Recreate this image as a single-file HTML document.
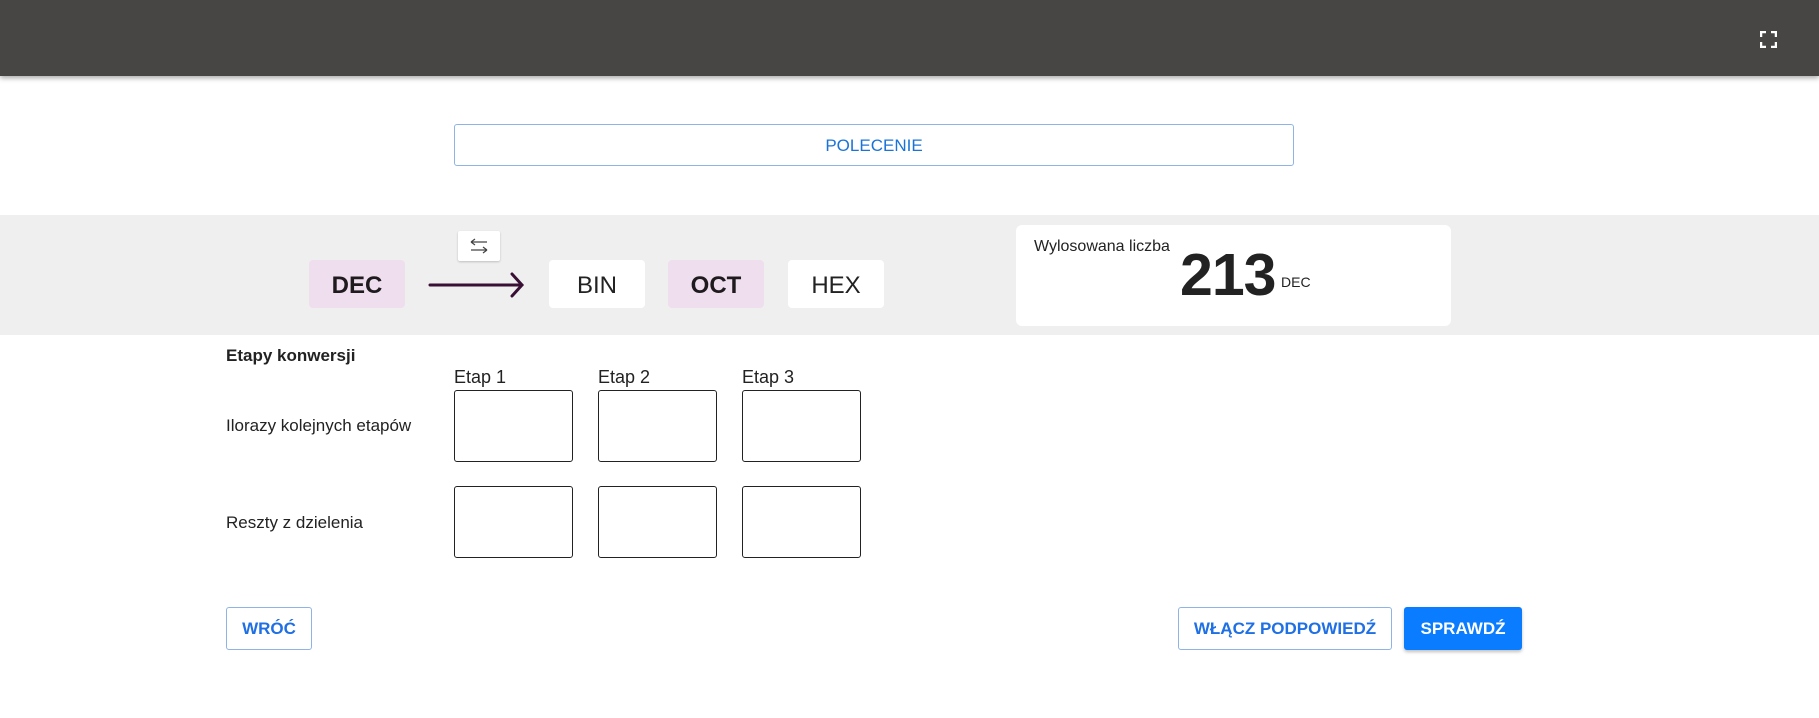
<!DOCTYPE html>
<html><head><meta charset="utf-8"><style>
*{margin:0;padding:0;box-sizing:border-box}
body{width:1819px;height:718px;position:relative;background:#fff;font-family:"Liberation Sans",sans-serif;color:#222;overflow:hidden}
.a{position:absolute}
.hdr{left:0;top:0;width:1819px;height:76px;background:#474644;box-shadow:0 2px 5px rgba(0,0,0,.35)}
.band{left:0;top:215px;width:1819px;height:120px;background:#efefef}
.tag{height:48px;width:96px;border-radius:4px;display:flex;align-items:center;justify-content:center;font-size:24px;top:260px;padding-top:4px}
.pink{background:#efdfee;font-weight:bold;color:#1f1a1e}
.wh{background:#fff;color:#222}
.box{width:119px;height:72px;border:1px solid #222;border-radius:3px}
.lbl{font-size:17px;color:#222}
.btn{height:43px;border-radius:3px;display:flex;align-items:center;justify-content:center;font-weight:bold;font-size:17px;top:607px}
</style></head><body>
<div class="a hdr"></div>
<svg class="a" style="left:1760px;top:31px" width="17" height="17" viewBox="0 0 17 17" fill="none" stroke="#fff" stroke-width="2.5"><path d="M1 6V1h5M11 1h5v5M16 11v5h-5M6 16H1v-5"/></svg>
<div class="a" style="left:454px;top:124px;width:840px;height:42px;border:1px solid #8fb3e6;border-radius:3px;color:#1a73d9;font-size:17px;display:flex;align-items:center;justify-content:center;padding-top:2px">POLECENIE</div>
<div class="a band"></div>
<div class="a tag pink" style="left:309px">DEC</div>
<svg class="a" style="left:428px;top:270px" width="100" height="30" viewBox="0 0 100 30" fill="none" stroke="#3a0f36" stroke-width="3" stroke-linecap="round"><path d="M2 15H94M84 4L94 15L84 26"/></svg>
<div class="a" style="left:458px;top:231px;width:42px;height:30px;background:#fff;border-radius:2px;box-shadow:0 1px 2px rgba(0,0,0,.2)"></div>
<svg class="a" style="left:469px;top:236px" width="20" height="20" viewBox="0 0 20 20" fill="none" stroke="#444" stroke-width="1.2"><path d="M2 6H18M2 6l4-3M2 6l4 3M2 14H18M18 14l-4-3M18 14l-4 3"/></svg>
<div class="a tag wh" style="left:549px">BIN</div>
<div class="a tag pink" style="left:668px">OCT</div>
<div class="a tag wh" style="left:788px">HEX</div>
<div class="a" style="left:1016px;top:225px;width:435px;height:101px;background:#fff;border-radius:6px"></div>
<div class="a" style="left:1034px;top:238px;font-size:16px">Wylosowana liczba</div>
<div class="a" style="left:1180px;top:241px;font-size:59px;font-weight:bold;letter-spacing:-1px;color:#222">213</div>
<div class="a" style="left:1281px;top:274px;font-size:14px">DEC</div>
<div class="a" style="left:226px;top:346px;font-size:17px;font-weight:bold">Etapy konwersji</div>
<div class="a lbl" style="left:454px;top:367px;font-size:18px">Etap 1</div>
<div class="a lbl" style="left:598px;top:367px;font-size:18px">Etap 2</div>
<div class="a lbl" style="left:742px;top:367px;font-size:18px">Etap 3</div>
<div class="a lbl" style="left:226px;top:416px">Ilorazy kolejnych etapów</div>
<div class="a lbl" style="left:226px;top:513px">Reszty z dzielenia</div>
<div class="a box" style="left:454px;top:390px"></div>
<div class="a box" style="left:598px;top:390px"></div>
<div class="a box" style="left:742px;top:390px"></div>
<div class="a box" style="left:454px;top:486px"></div>
<div class="a box" style="left:598px;top:486px"></div>
<div class="a box" style="left:742px;top:486px"></div>
<div class="a btn" style="left:226px;width:86px;border:1px solid #8fb3e6;color:#1f6fe5">WRÓĆ</div>
<div class="a btn" style="left:1178px;width:214px;border:1px solid #8fb3e6;color:#1f6fe5">WŁĄCZ PODPOWIEDŹ</div>
<div class="a btn" style="left:1404px;width:118px;background:#0a7cff;color:#fff;box-shadow:0 2px 3px rgba(0,0,0,.25)">SPRAWDŹ</div>
</body></html>
